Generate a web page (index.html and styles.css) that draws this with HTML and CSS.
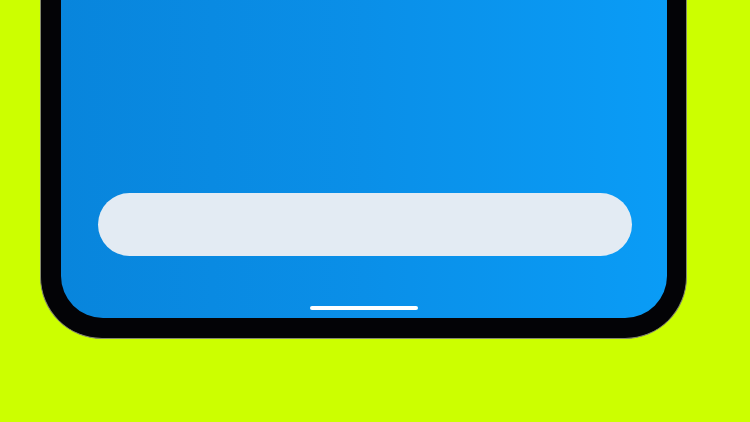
FILE: index.html
```html
<!DOCTYPE html>
<html>
<head>
<meta charset="utf-8">
<link rel="stylesheet" href="styles.css">
</head>
<body>
<div class="phone">
  <div class="screen">
    <div class="search"></div>
    <div class="home-indicator"></div>
  </div>
</div>
</body>
</html>
```
FILE: styles.css
```css
html, body {
  margin: 0;
  padding: 0;
  background: #ccff00;
  width: 750px;
  height: 422px;
  overflow: hidden;
}
.phone {
  box-sizing: border-box;
  margin-left: 40px;
  width: 647px;
  height: 339px;
  background: #030306;
  border: 1.5px solid #858a6c;
  border-top: none;
  border-radius: 0 0 62px 62px;
  padding: 0 19.5px 20px 19.5px;
}
.screen {
  box-sizing: border-box;
  height: 100%;
  border-radius: 0 0 42px 42px;
  background: linear-gradient(90deg, #0885dc 0%, #0a8fe8 50%, #0a9cf6 100%);
  display: flex;
  flex-direction: column;
  justify-content: flex-end;
  align-items: center;
  padding-bottom: 8px;
}
.search {
  width: 534px;
  height: 63px;
  border-radius: 32px;
  background: #e3ebf3;
  margin-bottom: 50px;
  margin-left: 2px;
}
.home-indicator {
  width: 108px;
  height: 4px;
  border-radius: 2px;
  background: #ffffff;
}
```
